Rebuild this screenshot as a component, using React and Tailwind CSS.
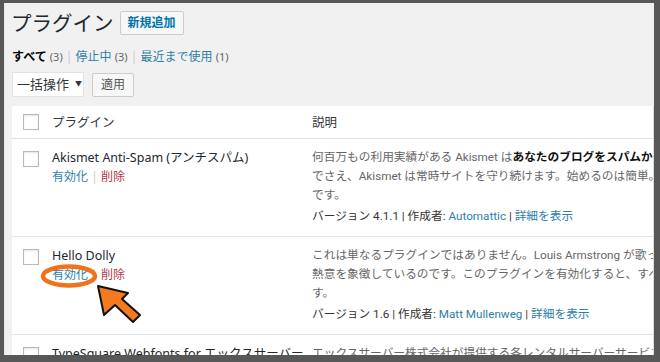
import React from "react";

function Box() {
  return <div className="w-[16px] h-[16px] border border-[#b4b9be] bg-white shadow-[inset_0_1px_2px_rgba(0,0,0,0.1)]" />;
}

function Row({ name, actions, desc, version, last }) {
  return (
    <div className={"flex bg-white " + (last ? "" : "border-b border-[#e5e5e5]")}>
      <div className="w-[40px] shrink-0 pl-[11px] pt-[12px]">
        <Box />
      </div>
      <div className="w-[248px] shrink-0 pt-[9px] pb-[10px]">
        <div className="text-[12.5px] leading-[19px] text-[#23282d] whitespace-nowrap">{name}</div>
        {actions && (
          <div className="text-[12px] leading-[19px] whitespace-nowrap">
            <span className="text-[#2e7ea6]">有効化</span>
            <span className="text-[#ccc]"> | </span>
            <span className="text-[#b03a48]">削除</span>
          </div>
        )}
      </div>
      <div className="flex-1 min-w-0 pl-[12px] pt-[9px] pb-[10px] overflow-hidden font-['Roboto','Noto_Sans_CJK_JP',sans-serif]">
        {desc.map((l, i) => (
          <div key={i} className="text-[11.7px] leading-[19px] text-[#666] whitespace-nowrap">{l}</div>
        ))}
        {version && (
          <div className="mt-[2px] text-[11.7px] leading-[19px] text-[#333] whitespace-nowrap">{version}</div>
        )}
      </div>
    </div>
  );
}

export default function App() {
  return (
    <div className="w-[660px] h-[362px] bg-[#585858] pt-[3px] pl-[4px] pr-[6px] pb-[7px] font-['Noto_Sans','Noto_Sans_CJK_JP',sans-serif]">
      <div className="relative h-full bg-[#f1f1f1] overflow-hidden border-l border-[#e8e8e8] pl-[7px]">
        <div className="flex items-center gap-[6px] pt-[5px]">
          <h1 className="-ml-[1px] text-[20.5px] leading-[30px] text-[#23282d] font-normal whitespace-nowrap">プラグイン</h1>
          <div className="h-[24px] px-[7px] flex items-center border border-[#ccc] bg-[#f7f7f7] rounded-[2px] text-[12px] font-bold text-[#0073aa] whitespace-nowrap">新規追加</div>
        </div>
        <div className="mt-[9px] text-[12px] leading-[20px] whitespace-nowrap text-[#555]">
          <span className="font-bold text-[#000]">すべて</span> <span className="text-[11px] text-[#666]">(3)</span>
          <span className="text-[#ccc]"> | </span>
          <span className="text-[#2e7ea6]">停止中</span> <span className="text-[11px] text-[#666]">(3)</span>
          <span className="text-[#ccc]"> | </span>
          <span className="text-[#2e7ea6]">最近まで使用</span> <span className="text-[11px] text-[#666]">(1)</span>
        </div>
        <div className="mt-[5px] flex items-center gap-[8px]">
          <div className="h-[25px] w-[72px] flex items-center gap-[6px] pl-[4px] bg-white border border-[#e3e3e3] text-[13px] text-[#32373c] whitespace-nowrap">
            <span>一括操作</span>
            <span className="text-[7px]">▼</span>
          </div>
          <div className="h-[24px] w-[42px] flex items-center justify-center bg-[#f7f7f7] border border-[#ccc] rounded-[2px] text-[12px] text-[#555]">適用</div>
        </div>
        <div className="mt-[9px] border-r border-[#ddd]">
          <div className="flex items-center h-[33px] bg-white border-b border-[#e1e1e1]">
            <div className="w-[40px] shrink-0 pl-[11px]"><Box /></div>
            <div className="w-[248px] shrink-0 text-[12.5px] text-[#32373c] pt-[2px]">プラグイン</div>
            <div className="pl-[12px] text-[12.5px] text-[#32373c] pt-[2px]">説明</div>
          </div>
          <Row
            name="Akismet Anti-Spam (アンチスパム)"
            actions
            desc={[
              <span key="a">何百万もの利用実績がある Akismet は<b className="text-[#111] font-bold">あなたのブログをスパムから保護する最も優れた方法の一つです。</b></span>,
              "でさえ、Akismet は常時サイトを守り続けます。始めるのは簡単。Akismet のページへ移動して",
              "です。",
            ]}
            version={<span>バージョン 4.1.1 | 作成者: <span className="text-[#2e7ea6]">Automattic</span> | <span className="text-[#2e7ea6]">詳細を表示</span></span>}
          />
          <Row
            name="Hello Dolly"
            actions
            desc={[
              "これは単なるプラグインではありません。Louis Armstrong が歌った最も有名な二つの単語に要約された",
              "熱意を象徴しているのです。このプラグインを有効化すると、すべての管理画面の右上に",
              "す。",
            ]}
            version={<span>バージョン 1.6 | 作成者: <span className="text-[#2e7ea6]">Matt Mullenweg</span> | <span className="text-[#2e7ea6]">詳細を表示</span></span>}
          />
          <Row
            name="TypeSquare Webfonts for エックスサーバー"
            desc={["エックスサーバー株式会社が提供する各レンタルサーバーサービスで利用できる"]}
            last
          />
        </div>
        <svg className="absolute left-0 top-0 pointer-events-none" width="660" height="362" viewBox="4 3 660 362">
          <ellipse cx="68" cy="276" rx="26" ry="9.5" fill="none" stroke="#f0731c" strokeWidth="4.5" />
          <polygon
            points="97,286 127,293 121,299 139,315 132,322 114,305 103,315"
            fill="#f47a20"
            stroke="#111"
            strokeWidth="2"
            strokeLinejoin="round"
          />
        </svg>
      </div>
    </div>
  );
}
